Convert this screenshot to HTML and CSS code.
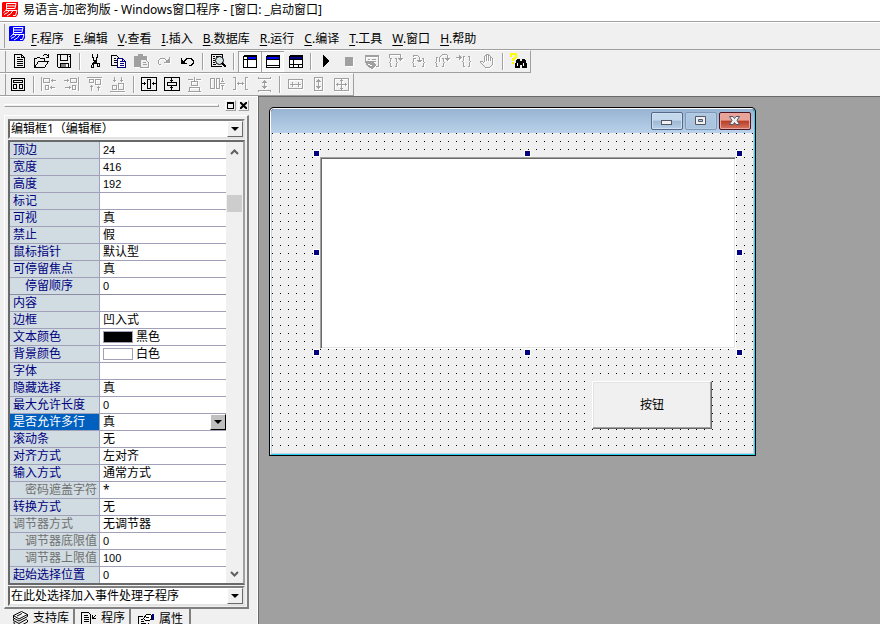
FILE: index.html
```html
<!DOCTYPE html>
<html lang="zh-CN">
<head>
<meta charset="utf-8">
<title>易语言-加密狗版</title>
<link rel="stylesheet" href="styles.css">
</head>
<body>
<header class="titlebar">
  <svg class="logo logo-red" viewBox="0 0 17 17"><path class="plate" d="M1 1h15v12l-2 3H0V2z"/><path class="ink" d="M4.500 7.500v-5h9.500l-1 5H4.500M5 5h8M5 7.500Q4 10 1.500 11.500M4 9.500h11l-1.500 5h-2.500M7.500 9.500Q6 12 2 13.500M11 9.500Q9 13.500 5 15"/></svg>
  <h1>易语言-加密狗版 - Windows窗口程序 - [窗口: _启动窗口]</h1>
</header>

<nav class="menubar">
  <svg class="logo logo-blue" viewBox="0 0 17 17"><path class="plate" d="M1 1h15v12l-2 3H0V2z"/><path class="ink" d="M4.500 7.500v-5h9.500l-1 5H4.500M5 5h8M5 7.500Q4 10 1.500 11.500M4 9.500h11l-1.500 5h-2.500M7.500 9.500Q6 12 2 13.500M11 9.500Q9 13.500 5 15"/></svg>
  <button><u>F</u>.程序</button>
  <button><u>E</u>.编辑</button>
  <button><u>V</u>.查看</button>
  <button><u>I</u>.插入</button>
  <button><u>B</u>.数据库</button>
  <button><u>R</u>.运行</button>
  <button><u>C</u>.编译</button>
  <button><u>T</u>.工具</button>
  <button><u>W</u>.窗口</button>
  <button><u>H</u>.帮助</button>
</nav>

<div class="toolbar" role="toolbar">
  <button aria-label="新建"><svg viewBox="0 0 17 17"><path d="M4.500 1.500h7l3 3v10h-10zM11.500 1.500v3h3M6.500 4.500h3M6.500 6.500h6M6.500 8.500h6M6.500 10.500h6M6.500 12.500h6"/></svg></button>
  <button aria-label="打开"><svg viewBox="0 0 17 17"><path d="M1.500 14.500v-9h2l1-1h2l1 1h4v2M1.500 14.500l4-6h10l-4 6zM9.500 3.500l2-2h2l2 2M15.500 1v4M13 4.500h3"/></svg></button>
  <button aria-label="保存"><svg viewBox="0 0 17 17"><path d="M1.500 1.500h13v13h-12l-1-1zM4.500 1.500v6h7v-6M4.500 14.500v-4h8v4M13 3.500h1"/><path class="fill-gray" d="M5 11h5v3H5z"/></svg></button>
  <span class="sep"></span>
  <button aria-label="剪切"><svg viewBox="0 0 17 17"><path d="M5.500 1v3l1 1v2l4 4M10.500 1v3l-1 1v2l-4 4M4.500 11.500h2v3h-2v-3M10.500 10.500h2v3h-2v-3M7 8h2v2H7z"/></svg></button>
  <button aria-label="复制"><svg viewBox="0 0 17 17"><path d="M7 12.500H1.500v-10h5l2 2v1M3.500 5.500h2M3.500 7.500h3M3.500 9.500h3"/><path class="navy" d="M7.500 5.500h5l3 3v6h-8zM12.500 5.500v3h3M9.500 8.500h2M9.500 10.500h4M9.500 12.500h4"/></svg></button>
  <button disabled aria-label="粘贴"><svg viewBox="0 0 17 17"><path class="solid" d="M1 3h4V1h5v2h4v4H7v7H1z"/><path class="paper" d="M7.500 6.500h5l3 3v5h-8z"/><path d="M9.500 9.500h3M9.500 11.500h4"/></svg></button>
  <button disabled aria-label="重做"><svg viewBox="0 0 17 17"><path d="M5 11.500H3.500l-1-1v-3l2-2h4l3 3M13.500 4v6M13 9.500H8M12.500 6v3M11.500 7v2M10.500 8v1"/></svg></button>
  <button aria-label="撤销"><svg viewBox="0 0 17 17"><path d="M10 12.500h2l2-2v-3l-2-2H8l-3 3M2.500 5v6M3 10.500h5M3.500 7v3M4.500 8v2M5.500 9v1"/></svg></button>
  <span class="sep"></span>
  <button aria-label="查找"><svg viewBox="0 0 17 17"><path d="M12 13.500H1.500v-12h11v3M3 3.500h2M3 5.500h2M3 7.500h2M3 9.500h2M3 11.500h3M6 3.500h5"/><circle class="lens" cx="9.500" cy="7.500" r="4"/><path class="thick" d="M12 10l4 4"/></svg></button>
  <span class="sep"></span>
  <button class="pressed" aria-label="工作夹"><svg viewBox="0 0 17 17"><path class="paper" d="M2 3h13v12H2z"/><path class="fill-blue" d="M7 4h8v2H7z"/><path d="M2.500 3.500h13v11h-13zM2.500 2.500h13M6.500 3v12M2.500 6.500h13"/></svg></button>
  <button class="pressed" aria-label="状态夹"><svg viewBox="0 0 17 17"><path class="paper" d="M2 3h13v12H2z"/><path class="fill-blue" d="M3 4h12v2H3z"/><path d="M2.500 3.500h13v11h-13zM2.500 2.500h13M2.500 6.500h13M2.500 12.500h13"/></svg></button>
  <button aria-label="布局"><svg viewBox="0 0 17 17"><path class="paper" d="M2 3h13v12H2z"/><path class="fill-navy" d="M3 4h12v2H3z"/><path d="M2.500 3.500h13v11h-13zM2.500 2.500h13M2.500 6.500h13M6.500 7v8M2.500 11.500h13M11.500 12v3"/></svg></button>
  <span class="sep"></span>
  <button aria-label="运行"><svg viewBox="0 0 17 17"><path class="solid" d="M5 2l6 6-6 6z"/></svg></button>
  <button disabled aria-label="停止"><svg viewBox="0 0 17 17"><path class="solid" d="M4 4h8v9H4z"/></svg></button>
  <button disabled aria-label="查看变量"><svg viewBox="0 0 17 17"><path d="M1.500 8V2.500h13v11H12M2 3.500h12M4 6.500h2M8 6.500h4M4 8.500h3M9 8.500h3"/><path class="solid" d="M1 8h3l2 1 2-1 4 3v2l-4 3-3-1-3-3z"/><path class="paper-line" d="M4 11l4 2"/></svg></button>
  <button disabled aria-label="单步跟踪"><svg viewBox="0 0 17 17"><path d="M2.500 5V1.500h11V8M11 5.500h5M12 6.500h3M5 5.500H3.500v3l-1 1 1 1v3H5M8 5.500h1.500v3l1 1-1 1v3H8"/></svg></button>
  <button disabled aria-label="单步进入"><svg viewBox="0 0 17 17"><path d="M3.500 4V2.500h4l2 2V9M7 7.500h5M8 8.500h3M6 5.500H3.500v3l-1 1 1 1v3H6M12 5.500h1.500v3l1 1-1 1v3H12"/></svg></button>
  <button disabled aria-label="单步返回"><svg viewBox="0 0 17 17"><path d="M6.500 9V4.500l3-3h4l1 1V8M12 5.500h5M13 6.500h3M5 4.500H3.500v4l-1 1 1 1v3H5M9 5.500h1.500v3l1 1-1 1v3H9"/></svg></button>
  <button disabled aria-label="运行到光标"><svg viewBox="0 0 17 17"><path d="M0 4.500h6M3.500 2v5M4.500 3v3M9 3.500H7.500v4l-1 1 1 1v4H9M12 3.500h1.500v4l1 1-1 1v4H12"/></svg></button>
  <button disabled aria-label="断点"><svg viewBox="0 0 17 17"><path d="M5.500 9V3.500l1-1 1 1V8M7.500 4V1.500h2V8M9.500 3.500l1-1 1 1V8M11.500 5.500l1-1 1 1v6l-3 3h-4l-5-5v-1h2l2 2"/></svg></button>
  <span class="sep"></span>
  <button aria-label="帮助查找"><svg viewBox="0 0 17 17"><path class="yellow" d="M1 4V1h5v3L4 6H3v2M3 9v2"/><path class="solid" d="M7 6h3v2h2V6h3l2 5v4h-5v-3h-2v3H5v-4z"/><path class="paper-line" d="M7.500 10v3M13.500 10v3"/></svg></button>
</div>

<div class="toolbar" role="toolbar">
  <button aria-label="对齐到网格"><svg viewBox="0 0 17 17"><path d="M1.500 2.500h13v12h-13zM3.500 4.500h9v2h-9zM3.500 8.500h3v4h-3zM9.500 8.500h3v4h-3z"/></svg></button>
  <span class="sep"></span>
  <button disabled aria-label="左对齐"><svg viewBox="0 0 17 17"><path d="M.5 1v14M2.500 2.500h6v4h-6zM4.500 9.500h3v4h-3zM10 4.500h5M11.500 3v3M9 11.500h5M10.500 10v3"/></svg></button>
  <button disabled aria-label="右对齐"><svg viewBox="0 0 17 17"><path d="M14.500 1v14M6.500 2.500h6v4h-6zM8.500 9.500h3v4h-3zM0 4.500h5M3.500 3v3M1 11.500h6M5.500 10v3"/></svg></button>
  <button disabled aria-label="顶对齐"><svg viewBox="0 0 17 17"><path d="M0 1.500h15M2.500 3.500h4v3h-4zM8.500 3.500h5v5h-5zM4.500 9v6M3 10.500h3M11.500 10v5M10 11.500h3"/></svg></button>
  <button disabled aria-label="底对齐"><svg viewBox="0 0 17 17"><path d="M0 15.500h15M2.500 9.500h4v4h-4zM8.500 7.500h5v6h-5zM4.500 1v5M3 4.500h3M11.500 1v5M10 4.500h3"/></svg></button>
  <span class="sep"></span>
  <button aria-label="水平居中"><svg viewBox="0 0 17 17"><path d="M.5 1.500h15v13H.5zM6.500 3.500h3v9h-3zM1 7.500h4M3.500 6v3M11 7.500h4M12.500 6v3"/></svg></button>
  <button aria-label="垂直居中"><svg viewBox="0 0 17 17"><path d="M.5 1.500h15v13H.5zM3.500 6.500h9v3h-9zM7.500 2v4M6 4.500h3M7.500 10v4M6 11.500h3"/></svg></button>
  <button disabled aria-label="水平等距"><svg viewBox="0 0 17 17"><path d="M7.500 1v4M1 3.500h5M9 3.500h5M4.500 5.500h6v4h-6zM2.500 11.500h10v4h-10zM1 15.500h13"/></svg></button>
  <button disabled aria-label="垂直等距"><svg viewBox="0 0 17 17"><path d="M.5 2.500h4v10h-4zM6.500 2.500h3v10h-3zM12.500 2v4M11 5.500h3M12.500 9v5M11 9.500h3M10 7.500h5"/></svg></button>
  <button disabled aria-label="等宽间隔"><svg viewBox="0 0 17 17"><path d="M0 1.500h2.500v12H0M15 1.500h-2.500v12H15M4 7.500h7M5.500 6v3M9.500 6v3"/></svg></button>
  <button disabled aria-label="等高间隔"><svg viewBox="0 0 17 17"><path d="M2.500 1v1.500h12V1M2.500 16v-1.500h12V16M8.500 4v9M7 5.500h3M6 6.500h5M7 11.500h3M6 10.500h5"/></svg></button>
  <span class="sep"></span>
  <button disabled aria-label="等宽"><svg viewBox="0 0 17 17"><path d="M1.500 3.500h14v9h-14zM3 8.500h11M5.500 6v5M11.500 6v5"/></svg></button>
  <button disabled aria-label="等高"><svg viewBox="0 0 17 17"><path d="M4.500 1.500h8v13h-8zM8.500 3v10M7 4.500h3M6 5.500h5M7 11.500h3M6 10.500h5"/></svg></button>
  <button disabled aria-label="等大小"><svg viewBox="0 0 17 17"><path d="M1.500 2.500h14v12h-14zM3 8.500h11M8.500 3v11M7 4.500h3M7 12.500h3M4.500 7v3M12.500 7v3"/></svg></button>
</div>

<main class="workspace">
  <aside class="dock">
    <div class="dock-head"><span class="grip"></span><button aria-label="浮动"><i class="max-glyph"></i></button><button aria-label="关闭"><svg viewBox="0 0 7 7"><path d="M0 0l7 7M7 0L0 7"/></svg></button></div>
    <div class="panel">
      <div class="combo"><select aria-label="组件"><option>编辑框1（编辑框）</option></select><span class="drop"></span></div>
      <div class="sheet">
        <table>
          <colgroup><col class="col-name"><col></colgroup>
          <tbody>
          <tr><th>顶边</th><td class="num">24</td></tr>
          <tr><th>宽度</th><td class="num">416</td></tr>
          <tr><th>高度</th><td class="num">192</td></tr>
          <tr><th>标记</th><td></td></tr>
          <tr><th>可视</th><td>真</td></tr>
          <tr><th>禁止</th><td>假</td></tr>
          <tr><th>鼠标指针</th><td>默认型</td></tr>
          <tr><th>可停留焦点</th><td>真</td></tr>
          <tr class="group-end"><th class="sub">停留顺序</th><td class="num">0</td></tr>
          <tr><th>内容</th><td></td></tr>
          <tr><th>边框</th><td>凹入式</td></tr>
          <tr><th>文本颜色</th><td><span class="color"><i class="swatch black"></i>黑色</span></td></tr>
          <tr><th>背景颜色</th><td><span class="color"><i class="swatch"></i>白色</span></td></tr>
          <tr><th>字体</th><td></td></tr>
          <tr><th>隐藏选择</th><td>真</td></tr>
          <tr><th>最大允许长度</th><td class="num">0</td></tr>
          <tr class="selected"><th><label for="multiline">是否允许多行</label></th><td><span class="cell-combo"><select id="multiline"><option>真</option></select><span class="drop"></span></span></td></tr>
          <tr><th>滚动条</th><td>无</td></tr>
          <tr><th>对齐方式</th><td>左对齐</td></tr>
          <tr><th>输入方式</th><td>通常方式</td></tr>
          <tr class="off"><th class="sub">密码遮盖字符</th><td>*</td></tr>
          <tr><th>转换方式</th><td>无</td></tr>
          <tr class="off"><th>调节器方式</th><td>无调节器</td></tr>
          <tr class="off"><th class="sub">调节器底限值</th><td class="num">0</td></tr>
          <tr class="off"><th class="sub">调节器上限值</th><td class="num">100</td></tr>
          <tr><th>起始选择位置</th><td class="num">0</td></tr>
          </tbody>
        </table>
        <div class="scroll"><svg viewBox="0 0 9 6"><path d="M1 5l3.500-3.500L8 5"/></svg><span class="thumb"></span><svg viewBox="0 0 9 6"><path d="M1 1l3.500 3.500L8 1"/></svg></div>
      </div>
      <div class="combo"><select aria-label="事件"><option>在此处选择加入事件处理子程序</option></select><span class="drop"></span></div>
    </div>
    <div class="tabs" role="tablist">
      <button role="tab"><svg class="smooth" viewBox="0 0 17 17"><path d="M2 11.500v2l5 3 8.500-4.500v-2M1.500 8.500v2l5.500 3 8-4.500"/><path class="page" d="M1.500 5.500l8-4 6 3-8.500 4.500zM1.500 5.500v2.500l5.500 3 8.500-4.500v-2M5 6l5-2.500"/></svg>支持库</button>
      <button role="tab"><svg viewBox="0 0 17 17"><path d="M1.500 2.500h7l2 2v10h-9zM3.500 5.500h4M3.500 7.500h5M3.500 9.500h5M3.500 11.500h5M12.500 5v4M13 8.500h3M13.500 7v1M14.500 6v1M15.500 5v1"/></svg>程序</button>
      <button role="tab" class="active" aria-selected="true"><svg viewBox="0 0 17 17"><path d="M5 5.500H.5v9h10v-3M2.500 8.500h2M2.500 10.500h3M2.500 12.500h5"/><path class="page" d="M5.500 7.500l3-4h4l1 1v4l-3 1h-3zM8 6.500h3"/><path class="fill-navy" d="M14 3h2v6h-2z"/></svg>属性</button>
    </div>
  </aside>

  <section class="desktop">
    <div class="window">
      <div class="window-inner">
        <div class="caption">
          <button aria-label="最小化"><svg viewBox="0 0 30 16"><rect class="glyph" x="9.500" y="7.500" width="10" height="4"/></svg></button>
          <button class="dim" aria-label="最大化"><svg viewBox="0 0 30 16"><path class="glyph" fill-rule="evenodd" d="M9.500 3.500h10v8h-10zM12.500 6.500h4v2h-4z"/></svg></button>
          <button class="close" aria-label="关闭"><svg viewBox="0 0 30 16"><path class="glyph" d="M9.500 3.500h3.500l1.500 2 1.500-2h3.500L17 7.500l2.500 4H16l-1.500-2-1.500 2H9.500l2.500-4z"/></svg></button>
        </div>
        <div class="form">
          <textarea class="edit" aria-label="编辑框1"></textarea>
          <i class="handle l t"></i><i class="handle c t"></i><i class="handle r t"></i>
          <i class="handle l m"></i><i class="handle r m"></i>
          <i class="handle l b"></i><i class="handle c b"></i><i class="handle r b"></i>
          <button class="push">按钮</button>
        </div>
      </div>
    </div>
  </section>
</main>
</body>
</html>
```
FILE: styles.css
```css
* { box-sizing: border-box; }

body {
  margin: 0;
  height: 100vh;
  display: flex;
  flex-direction: column;
  overflow: hidden;
  background: #f0f0f0;
  color: #000;
  font: 12px/16px "Noto Sans", "Noto Sans CJK SC", sans-serif;
}

button, select, textarea { font: inherit; color: inherit; margin: 0; padding: 0; border: 0; background: none; border-radius: 0; }
svg { display: block; }

/* title and menu */
.titlebar { display: flex; align-items: center; gap: 4px; height: 22px; padding: 0 2px 2px; background: #fff; border-bottom: 1px solid #a0a0a0; }
h1 { margin: 0; font-size: 12px; font-weight: 400; white-space: pre; }
.logo { width: 17px; height: 17px; flex: none; }
.ink { fill: none; stroke: #fff; stroke-width: 1; }
.logo-red .plate { fill: #f00; }
.logo-blue .plate { fill: #00f; }
.menubar { display: flex; align-items: center; height: 28px; padding-left: 4px; border-top: 1px solid #fff; border-bottom: 1px solid #a0a0a0; }
.menubar::before { content: ""; width: 1px; height: 24px; margin-right: 4px; background: #a0a0a0; }
.menubar .logo { margin-bottom: 6px; }
.menubar button { padding: 5px 5px 0; white-space: nowrap; }
.menubar u { text-underline-offset: 2px; }

/* toolbars */
.toolbar { display: flex; align-items: center; align-self: flex-start; height: 23px; border: solid; border-width: 1px 1px 1px 0; border-color: #fff #a0a0a0 #a0a0a0; }
.toolbar::before { content: ""; width: 3px; height: 21px; margin: 0 1px 0 2px; border-right: 1px solid #a0a0a0; }
.toolbar button { display: grid; place-items: center; width: 23px; height: 21px; }
.toolbar svg, .tabs svg { width: 17px; height: 17px; shape-rendering: crispEdges; fill: none; stroke: #000; }
.toolbar button:disabled svg { stroke: #a0a0a0; filter: drop-shadow(1px 1px 0 #fff); }
.toolbar .solid { fill: #000; stroke: none; }
.toolbar button:disabled .solid { fill: #a0a0a0; }
.toolbar .paper { fill: #fff; stroke: none; }
.toolbar button:disabled .paper { fill: #f0f0f0; stroke: #a0a0a0; }
.paper-line { stroke: #fff; }
.page { fill: #fff; }
.tabs svg.smooth { shape-rendering: auto; }
.fill-gray { fill: #808080; stroke: none; }
.fill-blue { fill: #00f; stroke: none; }
.fill-navy { fill: #000080; stroke: none; }
.navy { stroke: #000080; fill: #fff; }
.lens { fill: #d8e4e4; shape-rendering: auto; }
.thick { stroke-width: 2; }
.yellow { stroke: #ff0; stroke-width: 2; }
.pressed { background: #f8f8f8; box-shadow: inset 1px 1px #a0a0a0, inset -1px -1px #fff; }
.sep { width: 8px; height: 17px; background: linear-gradient(#a0a0a0, #a0a0a0) 3px 0 / 1px 100% no-repeat, linear-gradient(#fff, #fff) 4px 0 / 1px 100% no-repeat; }

/* docked property panel */
.workspace { flex: 1; display: flex; min-height: 0; }
.dock { width: 258px; flex: none; padding: 2px 8px 0 4px; border-top: 1px solid #fff; border-right: 1px solid #fff; overflow: hidden; }
.dock-head { display: flex; align-items: center; gap: 2px; height: 12px; margin-bottom: 4px; }
.grip { flex: 1; height: 3px; margin-right: 4px; border: 1px solid; border-color: #fff #a0a0a0 #a0a0a0 #fff; }
.dock-head button { display: grid; place-items: center; width: 11px; height: 11px; border: 1px solid; border-color: #fff #a0a0a0 #a0a0a0 #fff; }
.dock-head svg { width: 7px; height: 7px; stroke: #000; stroke-width: 2; }
.max-glyph { width: 7px; height: 7px; border: 1px solid #000; border-top-width: 2px; }
.panel { padding: 3px 2px 1px 3px; border: solid; border-width: 1px 2px 2px 1px; border-color: #fff #808080 #808080 #fff; }
.combo { display: flex; height: 20px; background: #fff; border: 2px solid; border-color: #808080 #e3e3e3 #e3e3e3 #696969; }
.combo select { flex: 1; min-width: 0; padding-left: 1px; appearance: none; line-height: 16px; outline: 0; }
.drop { display: grid; place-items: center; width: 16px; flex: none; background: #f0f0f0; border: 1px solid; border-color: #fff #696969 #696969 #fff; }
.drop::after { content: ""; border: solid transparent; border-width: 4px 4px 0; border-top-color: #000; }
.sheet { display: flex; height: 445px; margin: 1px 0; overflow: hidden; background: #fff; border: 2px solid; border-color: #696969 #a0a0a0 #696969 #696969; }
table { flex: 1; align-self: flex-start; table-layout: fixed; border-spacing: 0; }
.col-name { width: 90px; }
th, td { height: 17px; padding: 0; line-height: 16px; font-weight: 400; text-align: left; white-space: nowrap; border-bottom: 1px solid #a0a0b8; }
th { padding-left: 3px; background: #d0dce2; color: #000080; border-right: 1px solid #a0a0b8; }
td { padding-left: 3px; }
.num { font-family: "Liberation Sans", sans-serif; font-size: 11px; }
.sub { padding-left: 15px; }
.group-end th, .group-end td { border-bottom-color: #8c8ca4; }
.off th { color: #707070; }
.selected th { background: #0060c0; color: #fff; }
.color { display: flex; align-items: center; gap: 3px; height: 16px; }
.swatch { width: 30px; height: 12px; background: #fff; border: 1px solid #a0a0b8; }
.swatch.black { background: #000; }
.cell-combo { display: flex; height: 16px; }
.cell-combo select { flex: 1; min-width: 0; appearance: none; line-height: 16px; }
.cell-combo .drop { background: #c0c0c0; border-color: #fff #000 #000 #fff; }
.scroll { display: flex; flex-direction: column; align-items: center; width: 17px; padding: 7px 1px 6px 0; background: #f0f0f0; }
.scroll svg { width: 9px; height: 6px; flex: none; fill: none; stroke: #606060; stroke-width: 2; }
.thumb { width: 15px; height: 17px; margin: 40px 0 auto; background: #cdcdcd; }
.tabs { display: flex; align-items: flex-start; }
.tabs button { display: flex; align-items: center; gap: 4px; height: 18px; padding: 0 4px 0 8px; white-space: nowrap; border-right: 2px solid #808080; }
.tabs button + button { padding-left: 5px; }
.tabs button.active { height: 20px; padding: 0 6px 0 7px; }

/* design surface */
.desktop { flex: 1; min-width: 0; padding: 10px; background: #a0a0a0; border: solid #696969; border-width: 1px 0 0 1px; overflow: hidden; }
.window { width: 487px; background: #000; padding: 1px; border-radius: 5px 5px 0 0; }
.window-inner { border: 1px solid; border-color: #fff #28cfee #28cfee #fff; border-radius: 4px 4px 0 0; overflow: hidden; }
.caption { display: flex; justify-content: flex-end; gap: 2px; height: 24px; padding: 3px 3px 0; background: linear-gradient(#98b4d2, #b9d1ea); }
.caption button { width: 32px; height: 18px; border: 1px solid #54688a; border-radius: 2px; background: linear-gradient(#c4d8ec 0 45%, #9cb8d4 50%, #b8d0e8); box-shadow: inset 0 0 0 1px #d0e0f0; }
.caption .dim { border-color: #8098b8; box-shadow: inset 0 0 0 1px #b4cce4; background: linear-gradient(#b0c8e0, #a8c2de); }
.caption .close { border-color: #4c1420; background: linear-gradient(#e8a498 0 45%, #b83c24 50%, #d47864); box-shadow: inset 0 0 0 1px #e8a8a0; }
.caption svg { width: 30px; height: 16px; }
.glyph { fill: #f0f0f0; stroke: #505868; }
.form { position: relative; height: 321px; border: solid #c0d4e4; border-width: 0 1px 1px; background: conic-gradient(from 270deg at 1px 1px, #000 90deg, #f0f0f0 0) 0 0 / 8px 8px; }
.edit { position: absolute; left: 48px; top: 24px; width: 416px; height: 192px; resize: none; background: #fff; border: 1px solid; border-color: #a0a0a0 #fff #fff #a0a0a0; box-shadow: inset 1px 1px #696969, inset -1px -1px #e3e3e3; }
.push { position: absolute; left: 320px; top: 248px; width: 120px; height: 48px; background: #f0f0f0; border: 1px solid; border-color: #fff #696969 #696969 #fff; box-shadow: inset -1px -1px #a0a0a0, inset 1px 1px #e3e3e3; }
.handle { position: absolute; width: 7px; height: 7px; background: #000080; border: 1px solid #fff; }
.handle.l { left: 41px; }
.handle.c { left: 252px; }
.handle.r { left: 464px; }
.handle.t { top: 17px; }
.handle.m { top: 116px; }
.handle.b { top: 216px; }
```
